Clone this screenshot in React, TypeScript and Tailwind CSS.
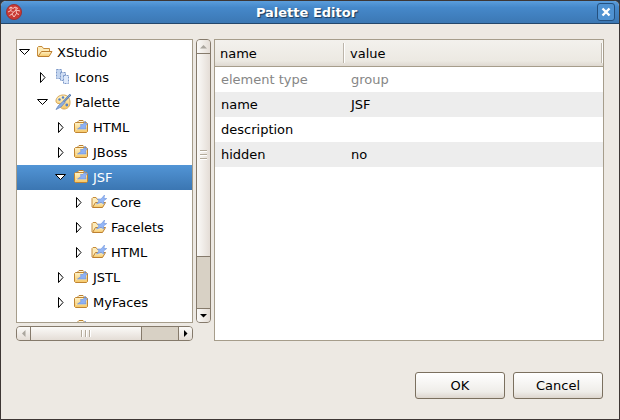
import { useId, type ReactNode } from "react";

type IconKind = "folder" | "icons" | "palette" | "bag" | "group";

type TreeNode = {
  label: string;
  level: 0 | 1 | 2 | 3;
  icon: IconKind;
  open?: boolean;
  selected?: boolean;
};

const nodes: TreeNode[] = [
  { label: "XStudio", level: 0, icon: "folder", open: true },
  { label: "Icons", level: 1, icon: "icons" },
  { label: "Palette", level: 1, icon: "palette", open: true },
  { label: "HTML", level: 2, icon: "bag" },
  { label: "JBoss", level: 2, icon: "bag" },
  { label: "JSF", level: 2, icon: "bag", open: true, selected: true },
  { label: "Core", level: 3, icon: "group" },
  { label: "Facelets", level: 3, icon: "group" },
  { label: "HTML", level: 3, icon: "group" },
  { label: "JSTL", level: 2, icon: "bag" },
  { label: "MyFaces", level: 2, icon: "bag" },
  { label: "", level: 2, icon: "bag" },
];

const indent = ["pl-px", "pl-[19px]", "pl-[37px]", "pl-[55px]"];

const properties = [
  { name: "element type", value: "group", readOnly: true },
  { name: "name", value: "JSF" },
  { name: "description", value: "" },
  { name: "hidden", value: "no" },
];

function Icon({ children }: { children: ReactNode }) {
  return (
    <svg viewBox="0 0 16 16" className="size-4 shrink-0" aria-hidden="true">
      {children}
    </svg>
  );
}

function Gold({ id }: { id: string }) {
  return (
    <defs>
      <linearGradient id={id} x1="0" y1="0" x2="0" y2="1">
        <stop offset="0" stopColor="#fff3c8" />
        <stop offset="1" stopColor="#f5c766" />
      </linearGradient>
    </defs>
  );
}

function FolderIcon() {
  const id = useId();
  return (
    <Icon>
      <Gold id={id} />
      <path d="M.5 12V3.500l1-1h3.500l1.500 2h6v3" fill="#fdebb8" stroke="#c58b3a" />
      <path d="M1 12.500 4.500 7.500h10.500l-3 5z" fill={`url(#${id})`} stroke="#bd7f30" strokeLinejoin="round" />
    </Icon>
  );
}

function GroupIcon() {
  const id = useId();
  return (
    <Icon>
      <Gold id={id} />
      <path d="M1 13V4.500l1-1h3l1.500 2h5v3" fill="#fdebb8" stroke="#c58b3a" />
      <path d="M1.500 13.500 4.500 8.500h10l-3 5z" fill={`url(#${id})`} stroke="#bd7f30" strokeLinejoin="round" />
      <path d="M13.500 1 13 4.500h2.800L12.500 7l.5 3-3-1.500L5.500 10 8 7 6.500 5H10z" fill="#93b6f7" stroke="#6f94dc" strokeWidth=".6" />
    </Icon>
  );
}

function BagIcon() {
  const id = useId();
  return (
    <Icon>
      <Gold id={id} />
      <path d="M5 4V2.500l1-1h4l1 1V4z" fill="#fff6dc" stroke="#b9802f" />
      <path d="M1.500 4.500 2.500 3.500h11l1 1v8l-1 1h-11l-1-1z" fill={`url(#${id})`} stroke="#c08431" />
      <path d="M3 10.500h10" stroke="#fbe3a4" />
      <path d="m12.500 2-.5 2.500h2.500L12.500 7l.5 3H4.500L8 7.500 7.500 5.500H10z" fill="#8db1f5" stroke="#6a8fd8" strokeWidth=".6" />
    </Icon>
  );
}

function IconsIcon() {
  return (
    <Icon>
      <g stroke="#7d99c8" strokeDasharray="2 1">
        <path d="M1.500.5h5v9h-5z" fill="#c3d5ef" />
        <path d="M5.500 3.500h5v8h-5z" fill="#cfddf3" />
        <path d="M8.500 6.500h5v8h-5z" fill="#dfeafb" />
      </g>
    </Icon>
  );
}

function PaletteIcon() {
  const id = useId();
  return (
    <Icon>
      <Gold id={id} />
      <path d="M8.500 1C4 1 1 3.500 1 7c0 2 1.500 2.500 3 2.500S5.500 11 5.500 12.500 7 15 9 15c4 0 6-3 6-6.500C15 4 12.500 1 8.500 1z" fill={`url(#${id})`} stroke="#d7a655" />
      <circle cx="4.500" cy="5.500" r="1.200" fill="#5680c4" />
      <circle cx="8" cy="3.500" r="1.200" fill="#5680c4" />
      <circle cx="11.800" cy="11" r="1.400" fill="#5680c4" />
      <path d="M15.500.5 8.500 8" stroke="#4d72a8" strokeWidth="2" />
      <path d="M15.500.5 8 8.500" stroke="#9dbbe5" strokeWidth=".8" />
      <path d="M8.500 7 10 8.500 6 13l-5 2.500 2.500-4z" fill="#8fafe2" stroke="#5b7fbb" strokeWidth=".7" />
    </Icon>
  );
}

function NodeIcon({ kind }: { kind: IconKind }) {
  if (kind === "folder") return <FolderIcon />;
  if (kind === "icons") return <IconsIcon />;
  if (kind === "palette") return <PaletteIcon />;
  if (kind === "bag") return <BagIcon />;
  return <GroupIcon />;
}

function Expander({ open }: { open?: boolean }) {
  return (
    <svg viewBox="0 0 13 13" className="size-[13px] shrink-0" aria-hidden="true">
      <path d={open ? "M1.500 3.500h10l-5 5z" : "M4.500 1.500v10l4.500-5z"} fill="#fff" stroke="#000" />
    </svg>
  );
}

function Logo() {
  return (
    <svg viewBox="0 0 16 16" className="size-4 shrink-0" aria-hidden="true">
      <circle cx="8" cy="8" r="7.600" fill="#c93a34" stroke="#9c2a2c" strokeWidth=".8" />
      <path d="M3 4.500 5 3l2 1.500L9 3l3 1.500M2 8l3-1.500 2 2L10 6l4 1M3.500 11.500 6 10l2 3 2.500-3.500 2.500 1M5 3v3.500M10 6V4M7 8.500 6 10M10.500 9.500 10 6" fill="none" stroke="#fac8c2" />
    </svg>
  );
}

function Scrollbar({ vertical }: { vertical?: boolean }) {
  const face = vertical
    ? "bg-linear-to-r from-[#fbfaf8] to-[#e4ddd6]"
    : "bg-linear-to-b from-[#fbfaf8] to-[#e4ddd6]";
  return (
    <div
      className={`flex overflow-hidden rounded-[4px] border border-[#857a6b] bg-[#d8d1c5] ${
        vertical ? "w-[15px] flex-col" : "h-[15px]"
      }`}
    >
      <button
        type="button"
        aria-label={vertical ? "Scroll up" : "Scroll left"}
        className={`flex size-[13px] shrink-0 items-center justify-center ${face}`}
      >
        <svg viewBox="0 0 7 7" className="size-[7px]">
          <path d={vertical ? "M0 5.500h7L3.500 2z" : "M5.500 0v7L2 3.500z"} fill="#aaa69e" />
        </svg>
      </button>
      <div
        className={`flex items-center justify-center gap-[2px] border-[#857a6b] ${face} ${
          vertical ? "flex-4 flex-col border-y" : "flex-3 border-x"
        }`}
      >
        {[0, 1, 2].map((n) => (
          <span
            key={n}
            className={`border-[#b3aa9b] bg-white ${vertical ? "h-[2px] w-[7px] border-t" : "h-[7px] w-[2px] border-l"}`}
          />
        ))}
      </div>
      <div className="flex-1" />
      <button
        type="button"
        aria-label={vertical ? "Scroll down" : "Scroll right"}
        className={`flex shrink-0 items-center justify-center border-[#857a6b] ${face} ${
          vertical ? "h-[14px] w-[13px] border-t" : "h-[13px] w-[14px] border-l"
        }`}
      >
        <svg viewBox="0 0 7 7" className="size-[7px]">
          <path d={vertical ? "M0 2h7L3.500 5.500z" : "M2 0v7l3.500-3.500z"} fill="#000" />
        </svg>
      </button>
    </div>
  );
}

function Tree() {
  return (
    <ul role="tree" aria-label="Palette tree" className="min-h-0 flex-1 overflow-hidden border border-[#a69d8b] bg-white">
      {nodes.map((node, i) => (
        <li
          key={i}
          role="treeitem"
          aria-expanded={!!node.open}
          aria-selected={!!node.selected}
          className={`flex h-[25px] items-center ${indent[node.level]} ${
            node.selected ? "bg-linear-to-b from-[#5295d6] to-[#3b76b2] text-white" : ""
          }`}
        >
          <Expander open={node.open} />
          <span className="mr-1 ml-[6px] pb-px">
            <NodeIcon kind={node.icon} />
          </span>
          {node.label}
        </li>
      ))}
    </ul>
  );
}

function HeaderCell({ children }: { children: ReactNode }) {
  return (
    <div className="flex h-[26px] items-center justify-between bg-linear-to-b from-[#f3f1ed] via-[#ece9e2] via-80% to-[#dfd9d1] pl-[5px]">
      <span className="pt-0.5">{children}</span>
      <span className="h-5 w-[2px] border-l border-[#bcb5aa] bg-white" />
    </div>
  );
}

function PropertyTable() {
  return (
    <div className="flex-1 border border-[#a69d8b] bg-white">
      <table className="w-full table-fixed border-collapse">
        <thead>
          <tr className="border-b border-[#a69d8b] text-left">
            <th className="w-[130px] p-0 font-normal">
              <HeaderCell>name</HeaderCell>
            </th>
            <th className="p-0 font-normal">
              <HeaderCell>value</HeaderCell>
            </th>
          </tr>
        </thead>
        <tbody>
          {properties.map((row) => (
            <tr key={row.name} className={`h-[25px] even:bg-[#ededed] ${row.readOnly ? "text-[#868686]" : ""}`}>
              <td className="p-0 pt-px pl-[6px]">{row.name}</td>
              <td className="p-0 pt-px pl-[6px]">{row.value}</td>
            </tr>
          ))}
        </tbody>
      </table>
    </div>
  );
}

function DialogButton({ children }: { children: ReactNode }) {
  return (
    <button
      type="button"
      className="h-[27px] w-[90px] rounded-[3px] border border-[#7b705f] bg-linear-to-b from-white via-[#efede9] via-75% to-[#ddd6ce]"
    >
      {children}
    </button>
  );
}

export default function App() {
  return (
    <div className="h-screen bg-[#26364a] font-['DejaVu_Sans',sans-serif] text-[13px] leading-4 text-black">
      <div className="flex h-full flex-col overflow-hidden rounded-t-[6px] border border-[#3d3634] bg-[#ede9e3]">
        <header className="flex h-[23px] shrink-0 items-center border-b border-[#24476b] bg-linear-to-b from-[#5a9ddc] via-[#4588ca] via-30% to-[#3c78b4] pr-1 pl-[5px]">
          <Logo />
          <h1 className="flex-1 pt-0.5 pr-1.5 text-center font-bold text-white [text-shadow:1px_1px_1px_#1d3a59]">
            Palette Editor
          </h1>
          <button
            type="button"
            aria-label="Close"
            className="flex size-[18px] items-center justify-center rounded-[3px] border border-[#24507e] bg-[#4f92d2]"
          >
            <svg viewBox="0 0 10 10" className="size-[10px]">
              <path d="m1.500 1.500 7 7M8.500 1.500l-7 7" stroke="#fff" strokeWidth="2.400" />
            </svg>
          </button>
        </header>
        <main className="flex min-h-0 flex-1 flex-col gap-[31px] px-[15px] pt-[15px] pb-5">
          <div className="flex min-h-0 flex-1 gap-[3px]">
            <div className="flex w-[195px] shrink-0 gap-[3px]">
              <div className="flex min-w-0 flex-1 flex-col gap-[3px]">
                <Tree />
                <Scrollbar />
              </div>
              <div className="flex pb-[18px]">
                <Scrollbar vertical />
              </div>
            </div>
            <PropertyTable />
          </div>
          <div className="flex justify-end gap-2 pr-px">
            <DialogButton>OK</DialogButton>
            <DialogButton>Cancel</DialogButton>
          </div>
        </main>
      </div>
    </div>
  );
}
